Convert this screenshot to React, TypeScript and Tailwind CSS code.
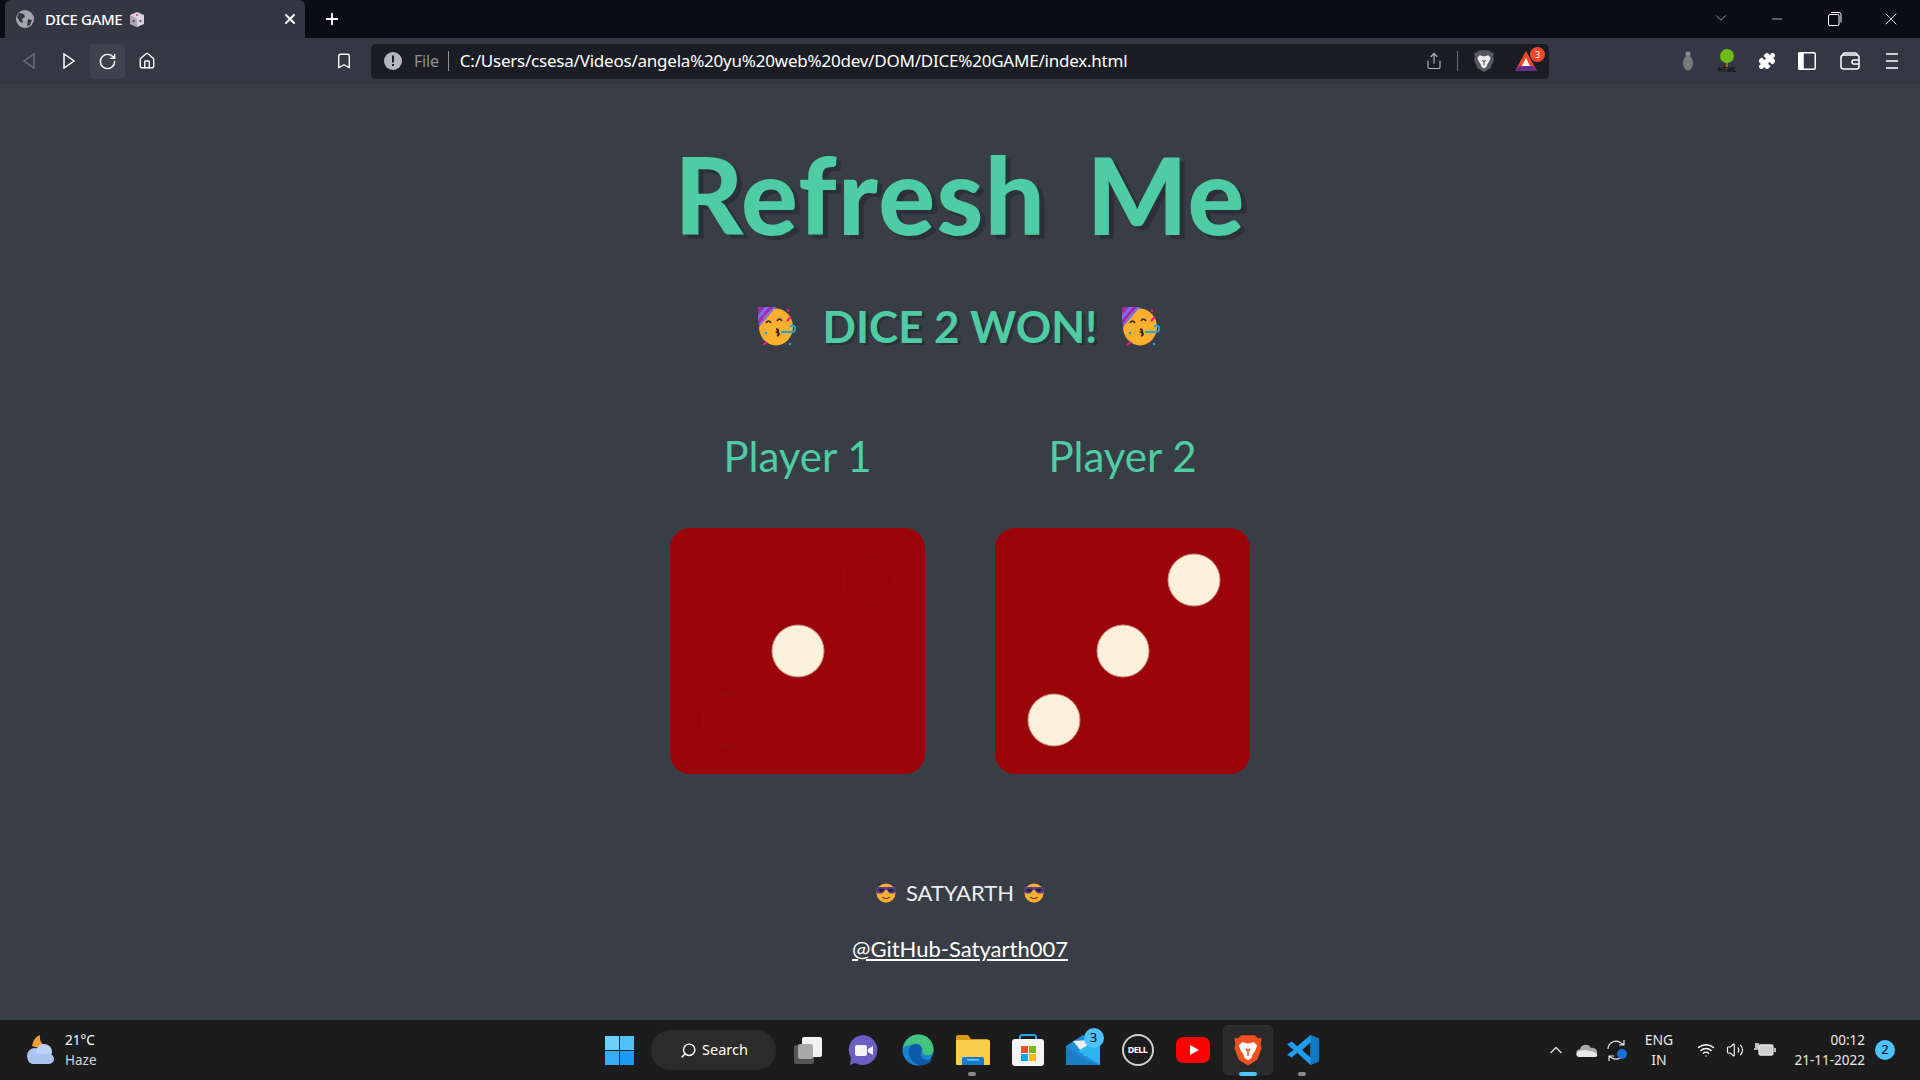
import { Bookmark, ChevronDown, ChevronUp, House, Minus, Plus, Puzzle, RotateCw, Search, Share, Volume2, Wifi, X } from "lucide-react";

const PartyFace = ({ className }: { className: string }) => (
  <svg viewBox="0 0 42 40" className={className}>
    <ellipse cx="19" cy="21" rx="17" ry="18.5" fill="#fbb02d" />
    <path d="M1 1h19C13 4 6 10 2 22 1 15 1 8 1 1z" fill="#a32aa8" />
    <path d="M1 9 8 1h4L1 14zM2 18 16 1h3L3 20z" fill="#7c6cf0" />
    <path d="M9 17q2.500-4 5 0M20 15q2.500-4 5 0" fill="none" stroke="#3a2a1a" strokeWidth="1.700" />
    <path d="M19 23q4 1 1 3 4 2 0 4" fill="none" stroke="#3a2a1a" strokeWidth="2" />
    <path d="M24 26h12q3-1 2-5-3-3-5 0" fill="none" stroke="#1ea7e8" strokeWidth="1.800" />
    <path d="M31 3v3M30 15l4-4M6 39l4-3" stroke="#e9198a" strokeWidth="2" />
    <circle cx="33" cy="38" r="1.300" fill="#1ea7e8" />
    <circle cx="9" cy="27" r="1.300" fill="#1ea7e8" />
  </svg>
);

const CoolFace = ({ className }: { className: string }) => (
  <svg viewBox="0 0 22 20" className={className}>
    <circle cx="11" cy="10" r="9.500" fill="#fbb02d" />
    <path d="M1 4h20v2l-1 4q-4 2-7-1l-1-2h-2l-1 2q-3 3-7 1L1 6z" fill="#5b3a8c" />
    <path d="M3 6h6q0 3-3 3-2 0-3-3zM13 6h6q-1 3-3 3-3 0-3-3z" fill="#2a2238" />
    <path d="M7 14q4 3 8 0" fill="none" stroke="#7a4510" strokeWidth="1.200" />
  </svg>
);

const Die = ({ dots, ghosts }: { dots: number[][]; ghosts: number[][] }) => (
  <svg viewBox="0 0 255 246" className="h-[246px] w-[255px]">
    <rect width="255" height="246" rx="20" fill="#9b0509" />
    {ghosts.map(([x, y]) => (
      <circle key={x} cx={x} cy={y} r="26" fill="none" stroke="#8f1113" strokeWidth="1" />
    ))}
    {dots.map(([x, y]) => (
      <circle key={x} cx={x} cy={y} r="26" fill="#fbf1db" stroke="#d08a80" strokeWidth="1" />
    ))}
  </svg>
);

const BraveLion = ({ className, fill, face }: { className: string; fill: string; face: string }) => (
  <svg viewBox="0 0 24 28" className={className}>
    <path d="M6 1h12l3 3 3-.5-1 6 1 3-4 10-8 5-8-5-4-10 1-3-1-6 3 .5z" fill={fill} />
    <path d="M7 7l5 1.500L17 7l3 3-2 5-2 3-1 3-3 2-3-2-1-3-2-3-2-5z" fill={face} />
    <path d="M10 13l2 2 2-2M12 15v4" stroke={fill} strokeWidth="1.400" fill="none" />
  </svg>
);

const ToolSlot = ({ children, className = "" }: { children: React.ReactNode; className?: string }) => (
  <div className={`flex h-[35px] w-[33px] items-center justify-center ${className}`}>{children}</div>
);

const TaskSlot = ({ children, pin, active }: { children: React.ReactNode; pin?: boolean; active?: boolean }) => (
  <div className="relative flex h-[50px] w-[55px] items-center justify-center">
    {active && <div className="absolute inset-y-0 left-[3px] w-[50px] rounded-[5px] border border-[#303030] bg-[#2a2a2a]" />}
    <div className="relative">{children}</div>
    {pin && <div className="absolute bottom-[-1px] left-[23px] h-[4px] w-[8px] rounded-full bg-[#8a8a8a]" />}
    {active && <div className="absolute bottom-[-1px] left-[19px] h-[4px] w-[18px] rounded-full bg-[#4cc2ff]" />}
  </div>
);

const App = () => {
  return (
    <div className="flex h-[1080px] w-[1920px] flex-col overflow-hidden bg-[#393e46] font-['Noto_Sans',sans-serif]">
      {/* title bar */}
      <div className="flex h-[38px] items-end bg-[#0b0c15] text-white">
        <div className="ml-[5px] flex h-[38px] w-[300px] items-center rounded-t-[6px] bg-[#343743] pl-[11px]">
          <svg viewBox="0 0 18 18" className="h-[18px] w-[18px]">
            <circle cx="9" cy="9" r="9" fill="#a4a6ad" />
            <path d="M3 3l5 1 1 3-3 2 1 4-3-1-3-5zM12 9l4 1-2 5-3 1z" fill="#343743" />
          </svg>
          <span className="ml-[11px] text-[15px] font-medium tracking-[-0.4px]">DICE GAME</span>
          <svg viewBox="0 0 14 15" className="ml-[8px] h-[15px] w-[14px]">
            <path d="M7 0l7 3v9l-7 3-7-3V3z" fill="#d8d2dc" />
            <path d="M7 7v8l-7-3V3z" fill="#a9a3b0" />
            <circle cx="7" cy="3" r="1" fill="#d0455a" />
            <circle cx="3.500" cy="9" r="1" fill="#444" />
            <circle cx="10.500" cy="9" r="1" fill="#444" />
          </svg>
          <X className="ml-auto mr-[7px] h-[16px] w-[16px]" strokeWidth={3} />
        </div>
        <Plus className="mb-[10px] ml-[18px] h-[18px] w-[18px]" strokeWidth={2.500} />
        <div className="flex-1" />
        <ChevronDown className="mb-[11px] h-[18px] w-[18px] text-[#c8c8cc]" strokeWidth={1} />
        <Minus className="mb-[11px] ml-[39px] h-[16px] w-[16px]" strokeWidth={1} />
        <svg viewBox="0 0 14 14" fill="none" stroke="white" className="mb-[12px] ml-[43px] h-[14px] w-[14px]">
          <rect x="0.500" y="2.500" width="10.500" height="11" rx="1.500" />
          <path d="M3 .5h8q2 0 2 2v8" />
        </svg>
        <X className="mb-[9px] ml-[39px] mr-[19px] h-[20px] w-[20px]" strokeWidth={1} />
      </div>

      {/* toolbar */}
      <div className="flex h-[46px] items-center bg-[#353844] pl-[12px] text-white">
        <ToolSlot>
          <svg viewBox="0 0 12 16" fill="none" stroke="#6b6e78" strokeWidth="1.500" className="h-[16px] w-[12px]"><path d="M11 1v14L1 8z" /></svg>
        </ToolSlot>
        <ToolSlot className="ml-[7px]">
          <svg viewBox="0 0 12 16" fill="none" stroke="white" strokeWidth="1.500" className="h-[16px] w-[12px]"><path d="M1 1v14l10-7z" /></svg>
        </ToolSlot>
        <ToolSlot className="ml-[5px] w-[35px] rounded-[4px] bg-[#3e424e]">
          <RotateCw className="h-[19px] w-[19px]" strokeWidth={1.800} />
        </ToolSlot>
        <ToolSlot className="ml-[5px]">
          <House className="h-[18px] w-[18px]" strokeWidth={1.800} />
        </ToolSlot>
        <ToolSlot className="ml-[164px]">
          <Bookmark className="h-[18px] w-[18px]" strokeWidth={1.800} />
        </ToolSlot>
        <div className="ml-[11px] flex h-[35px] w-[1178px] items-center rounded-[5px] bg-[#1b1d24] pl-[13px]">
          <svg viewBox="0 0 18 18" className="h-[18px] w-[18px]">
            <circle cx="9" cy="9" r="9" fill="#b5b7bd" />
            <path d="M8 3.500h2v7H8zM8 12h2v2H8z" fill="#1b1d24" />
          </svg>
          <span className="ml-[12px] text-[16px] tracking-[-0.2px] text-[#8d9098]">File</span>
          <div className="ml-[9px] h-[20px] w-px bg-[#8d9098]" />
          <span className="ml-[11px] text-[17px] tracking-[-0.22px]">C:/Users/csesa/Videos/angela%20yu%20web%20dev/DOM/DICE%20GAME/index.html</span>
          <div className="flex-1" />
          <Share className="h-[18px] w-[18px] text-[#b5b7bd]" strokeWidth={1.500} />
          <div className="ml-[14px] h-[20px] w-px bg-[#6b6e78]" />
          <BraveLion className="ml-[16px] h-[24px] w-[20px]" fill="#55585f" face="#f0f0f0" />
          <div className="relative ml-[20px] mr-[11px] h-[24px] w-[24px]">
            <svg viewBox="0 0 24 24" className="absolute inset-0 h-[24px] w-[24px]">
              <path d="M12 2l11 20H1z" fill="#f04a24" />
              <path d="M1 22l4-5h14l4 5z" fill="#662d91" />
              <path d="M12 9l4 8H8z" fill="white" />
            </svg>
            <div className="absolute right-[-7px] top-[-2px] flex h-[15px] w-[15px] items-center justify-center rounded-full bg-[#f0482a] text-[9px] text-white">3</div>
          </div>
        </div>
        <svg viewBox="0 0 10 20" className="ml-[134px] h-[20px] w-[10px]">
          <circle cx="5" cy="3" r="2.500" fill="#8a8c92" />
          <ellipse cx="5" cy="12" rx="5" ry="7.500" fill="#77797f" />
        </svg>
        <svg viewBox="0 0 20 24" className="ml-[24px] h-[24px] w-[20px]">
          <path d="M9 11h2v9H9z" fill="#9c6a1e" />
          <circle cx="10" cy="7" r="7" fill="#6dbb15" />
          <text x="10" y="23" textAnchor="middle" fontSize="6.500" fontWeight="700" fill="#111">HTML</text>
        </svg>
        <Puzzle className="ml-[21px] h-[18px] w-[18px]" fill="white" strokeWidth={1.500} />
        <svg viewBox="0 0 18 18" fill="none" stroke="white" strokeWidth="1.500" className="ml-[22px] h-[18px] w-[18px]">
          <rect x="0.750" y="0.750" width="16.500" height="16.500" rx="1.500" />
          <path d="M1 1h4v16H1z" fill="white" />
        </svg>
        <svg viewBox="0 0 20 18" fill="none" stroke="white" strokeWidth="1.500" className="ml-[24px] h-[18px] w-[20px]">
          <rect x="1" y="3" width="18" height="14" rx="2.500" />
          <path d="M3 3V2.500Q3 1 5 1h10q2 0 2 2M19 8h-5q-2 0-2 2t2 2h5" />
        </svg>
        <svg viewBox="0 0 12 16" stroke="white" strokeWidth="1.500" className="ml-[26px] h-[16px] w-[12px]"><path d="M0 1h12M0 8h12M0 15h12" /></svg>
      </div>

      {/* page */}
      <div className="flex flex-1 flex-col items-center font-['Lato',sans-serif] text-[#4ecca3]">
        <h1 className="mt-[50px] text-[106px] font-black leading-[120px] tracking-[1.400px] [text-shadow:5px_4px_0_#2b303a] [word-spacing:14px]">Refresh Me</h1>
        <div className="mt-[52px] flex h-[40px] items-center">
          <PartyFace className="h-[40px] w-[42px]" />
          <h2 className="mx-[24px] text-[44px] font-bold leading-[40px] [text-shadow:3px_2px_0_#2b303a]">DICE 2 WON!</h2>
          <PartyFace className="h-[40px] w-[42px]" />
        </div>
        <div className="mt-[85px] flex gap-[70px]">
          <div className="flex flex-col items-center">
            <div className="text-[42px] leading-[50px]">Player 1</div>
            <div className="mt-[47px]">
              <Die dots={[[128, 123]]} ghosts={[[199, 52], [59, 192]]} />
            </div>
          </div>
          <div className="flex flex-col items-center">
            <div className="text-[42px] leading-[50px]">Player 2</div>
            <div className="mt-[47px]">
              <Die dots={[[199, 52], [128, 123], [59, 192]]} ghosts={[]} />
            </div>
          </div>
        </div>
        <div className="mt-[106px] flex h-[26px] items-center text-[#eeeeee]">
          <CoolFace className="h-[20px] w-[22px]" />
          <span className="mx-[9px] text-[22px] leading-[26px]">SATYARTH</span>
          <CoolFace className="h-[20px] w-[22px]" />
        </div>
        <a className="mt-[30px] text-[22px] leading-[26px] text-white underline">@GitHub-Satyarth007</a>
      </div>

      {/* taskbar */}
      <div className="flex h-[60px] items-center bg-[#1c1c1c] text-white">
        <div className="flex w-[605px] items-center pl-[24px]">
          <svg viewBox="0 0 32 32" className="h-[32px] w-[32px]">
            <path d="M16 1q-1 9 6 11-6 3-14 0 1-8 8-11z" fill="#f0a030" />
            <circle cx="11" cy="22" r="8" fill="#a9c4ee" />
            <circle cx="20" cy="18" r="8" fill="#bcd3f5" />
            <rect x="4" y="20" width="26" height="10" rx="5" fill="#a9c4ee" />
          </svg>
          <div className="ml-[9px] text-[13.500px] leading-[20px]">
            <div>21°C</div>
            <div className="text-[#d6d6d6]">Haze</div>
          </div>
        </div>
        <div className="grid h-[29px] w-[29px] grid-cols-2 gap-[1px]">
          <div className="bg-[#6bd0fb]" />
          <div className="bg-[#50c0f8]" />
          <div className="bg-[#35aef8]" />
          <div className="bg-[#1c9bf5]" />
        </div>
        <div className="ml-[17px] flex h-[40px] w-[125px] items-center rounded-full bg-[#2b2b2b] pl-[29px]">
          <Search className="h-[17px] w-[17px] -scale-x-100" />
          <span className="ml-[5px] text-[14.500px]">Search</span>
        </div>
        <div className="ml-[4px] flex">
          <TaskSlot>
            <svg viewBox="0 0 30 30" className="h-[30px] w-[30px]">
              <rect x="1" y="10" width="20" height="19" rx="2" fill="#555" />
              <rect x="9" y="2" width="20" height="20" rx="2" fill="#f2f2f2" />
              <rect x="5" y="9" width="15" height="15" rx="2" fill="#a8a8a8" />
            </svg>
          </TaskSlot>
          <TaskSlot>
            <svg viewBox="0 0 32 32" className="h-[32px] w-[32px]">
              <path d="M16 1a15 15 0 1 1-8 28l-5 2 1-7A15 15 0 0 1 16 1z" fill="#6b5fc4" />
              <rect x="8" y="11" width="12" height="11" rx="2" fill="#f4f2ff" />
              <path d="M21 15l5-3v9l-5-3z" fill="#f4f2ff" />
            </svg>
          </TaskSlot>
          <TaskSlot>
            <svg viewBox="0 0 32 32" className="h-[32px] w-[32px]">
              <circle cx="16" cy="16" r="15.500" fill="#1b82cf" />
              <path d="M1 14C3 5 10 .5 16 .5 26 .5 32 8 31.500 17c0 3-4 5-8 4-3-1-4-3-3-5 0-4-4-7-8-6-5 1-10 2-11.500 4z" fill="#44c47a" />
              <path d="M20 17c0-5-3-7-6-7-5 0-8 5-7 10 1 6 6 11 12 11 5 0 9-2 11-6-4 2-10 1-11-3-1-2 0-4 1-5z" fill="#0d5aa8" />
            </svg>
          </TaskSlot>
          <TaskSlot pin>
            <svg viewBox="0 0 34 30" className="h-[30px] w-[34px]">
              <path d="M0 2q0-2 2-2h10l3 4h17v6H0z" fill="#d49a10" />
              <rect x="0" y="5" width="34" height="25" rx="1" fill="#fbcb4a" />
              <path d="M6 30v-6q0-2 2-2h18q2 0 2 2v6z" fill="#0e7cc8" />
              <rect x="11" y="24" width="12" height="1.500" fill="#7cc4f0" />
            </svg>
          </TaskSlot>
          <TaskSlot>
            <svg viewBox="0 0 34 32" className="h-[32px] w-[34px]">
              <path d="M9 7V3q0-2 2-2h12q2 0 2 2v4" fill="none" stroke="#25a4e6" strokeWidth="2" />
              <rect x="1" y="5" width="32" height="27" rx="3" fill="#f6f6f6" />
              <rect x="10" y="12" width="7" height="7" fill="#f05022" />
              <rect x="18" y="12" width="7" height="7" fill="#7fba00" />
              <rect x="10" y="20" width="7" height="7" fill="#00a4ef" />
              <rect x="18" y="20" width="7" height="7" fill="#ffb900" />
            </svg>
          </TaskSlot>
          <TaskSlot>
            <svg viewBox="0 0 34 30" className="h-[30px] w-[34px]">
              <path d="M0 11L17 0l17 11v19H0z" fill="#1c8ed8" />
              <path d="M7 6l17-1 5 10-10 6z" fill="#eeeeee" />
              <path d="M34 11v19L12 16l15-9z" fill="#2cb4ee" />
              <path d="M0 30V11l22 15 12 4z" fill="#1a7ec6" />
            </svg>
            <div className="absolute right-[-4px] top-[-7px] flex h-[20px] w-[20px] items-center justify-center rounded-full bg-[#4cc2ff] text-[13px] text-black">3</div>
          </TaskSlot>
          <TaskSlot>
            <div className="flex h-[32px] w-[32px] items-center justify-center rounded-full border-2 border-[#d0d0d0] text-[9px] font-bold tracking-[-0.5px]">DELL</div>
          </TaskSlot>
          <TaskSlot>
            <svg viewBox="0 0 34 26" className="h-[26px] w-[34px]">
              <rect width="34" height="26" rx="7" fill="#f00" />
              <path d="M14 8l9 5-9 5z" fill="white" />
            </svg>
          </TaskSlot>
          <TaskSlot active>
            <BraveLion className="h-[32px] w-[28px]" fill="#f1501f" face="#ffffff" />
          </TaskSlot>
          <TaskSlot pin>
            <svg viewBox="0 0 34 34" className="h-[32px] w-[34px]">
              <path d="M25 1l9 4v24l-9 4-14-13-6 5-5-3 7-5-7-6 5-3 6 5z" fill="#1f9cf0" />
              <path d="M25 9l-9 8 9 8z" fill="#1c1c1c" />
              <path d="M25 1l9 4v24l-9 4z" fill="#0f78c4" />
            </svg>
          </TaskSlot>
        </div>
        <div className="flex-1" />
        <ChevronUp className="h-[20px] w-[20px] text-[#e8e8e8]" strokeWidth={1.500} />
        <svg viewBox="0 0 22 14" className="ml-[10px] h-[14px] w-[22px]">
          <path d="M5 14a4 4 0 0 1-1-8 6 6 0 0 1 11-1 4.500 4.500 0 0 1 3 9z" fill="#a8a8a8" />
          <path d="M3 14a3 3 0 0 1 1-6q6-2 9 0 5 0 8 3 1 2-1 3z" fill="#e8e8e8" />
        </svg>
        <svg viewBox="0 0 22 22" fill="none" stroke="#e8e8e8" strokeWidth="1.200" className="ml-[8px] h-[22px] w-[22px]">
          <path d="M2 10a8 8 0 0 1 13-6l3 2M18 1v5h-5M18 12a8 8 0 0 1-12 7l-3-2M3 22v-5h5" />
          <circle cx="16" cy="15" r="5" fill="#1472d8" stroke="none" />
        </svg>
        <div className="ml-[16px] w-[30px] text-center text-[14px] leading-[20px] text-[#e8e8e8]">
          <div>ENG</div>
          <div>IN</div>
        </div>
        <Wifi className="ml-[23px] h-[18px] w-[18px]" strokeWidth={1.800} />
        <Volume2 className="ml-[11px] h-[18px] w-[18px]" strokeWidth={1.500} />
        <svg viewBox="0 0 22 16" fill="none" stroke="#e8e8e8" strokeWidth="1.300" className="ml-[10px] h-[16px] w-[22px]">
          <rect x="5" y="3" width="14" height="10" rx="1.500" fill="#cfcfcf" />
          <path d="M21 6v4M0 7h5M2 1v5M4 1v5" strokeWidth="1.600" />
        </svg>
        <div className="ml-[10px] w-[79px] text-right text-[13.500px] leading-[20px] text-[#e8e8e8]">
          <div>00:12</div>
          <div>21-11-2022</div>
        </div>
        <div className="ml-[10px] mr-[25px] flex h-[20px] w-[20px] items-center justify-center rounded-full bg-[#4cc2ff] text-[13px] text-black">2</div>
      </div>
    </div>
  );
};

export default App;
